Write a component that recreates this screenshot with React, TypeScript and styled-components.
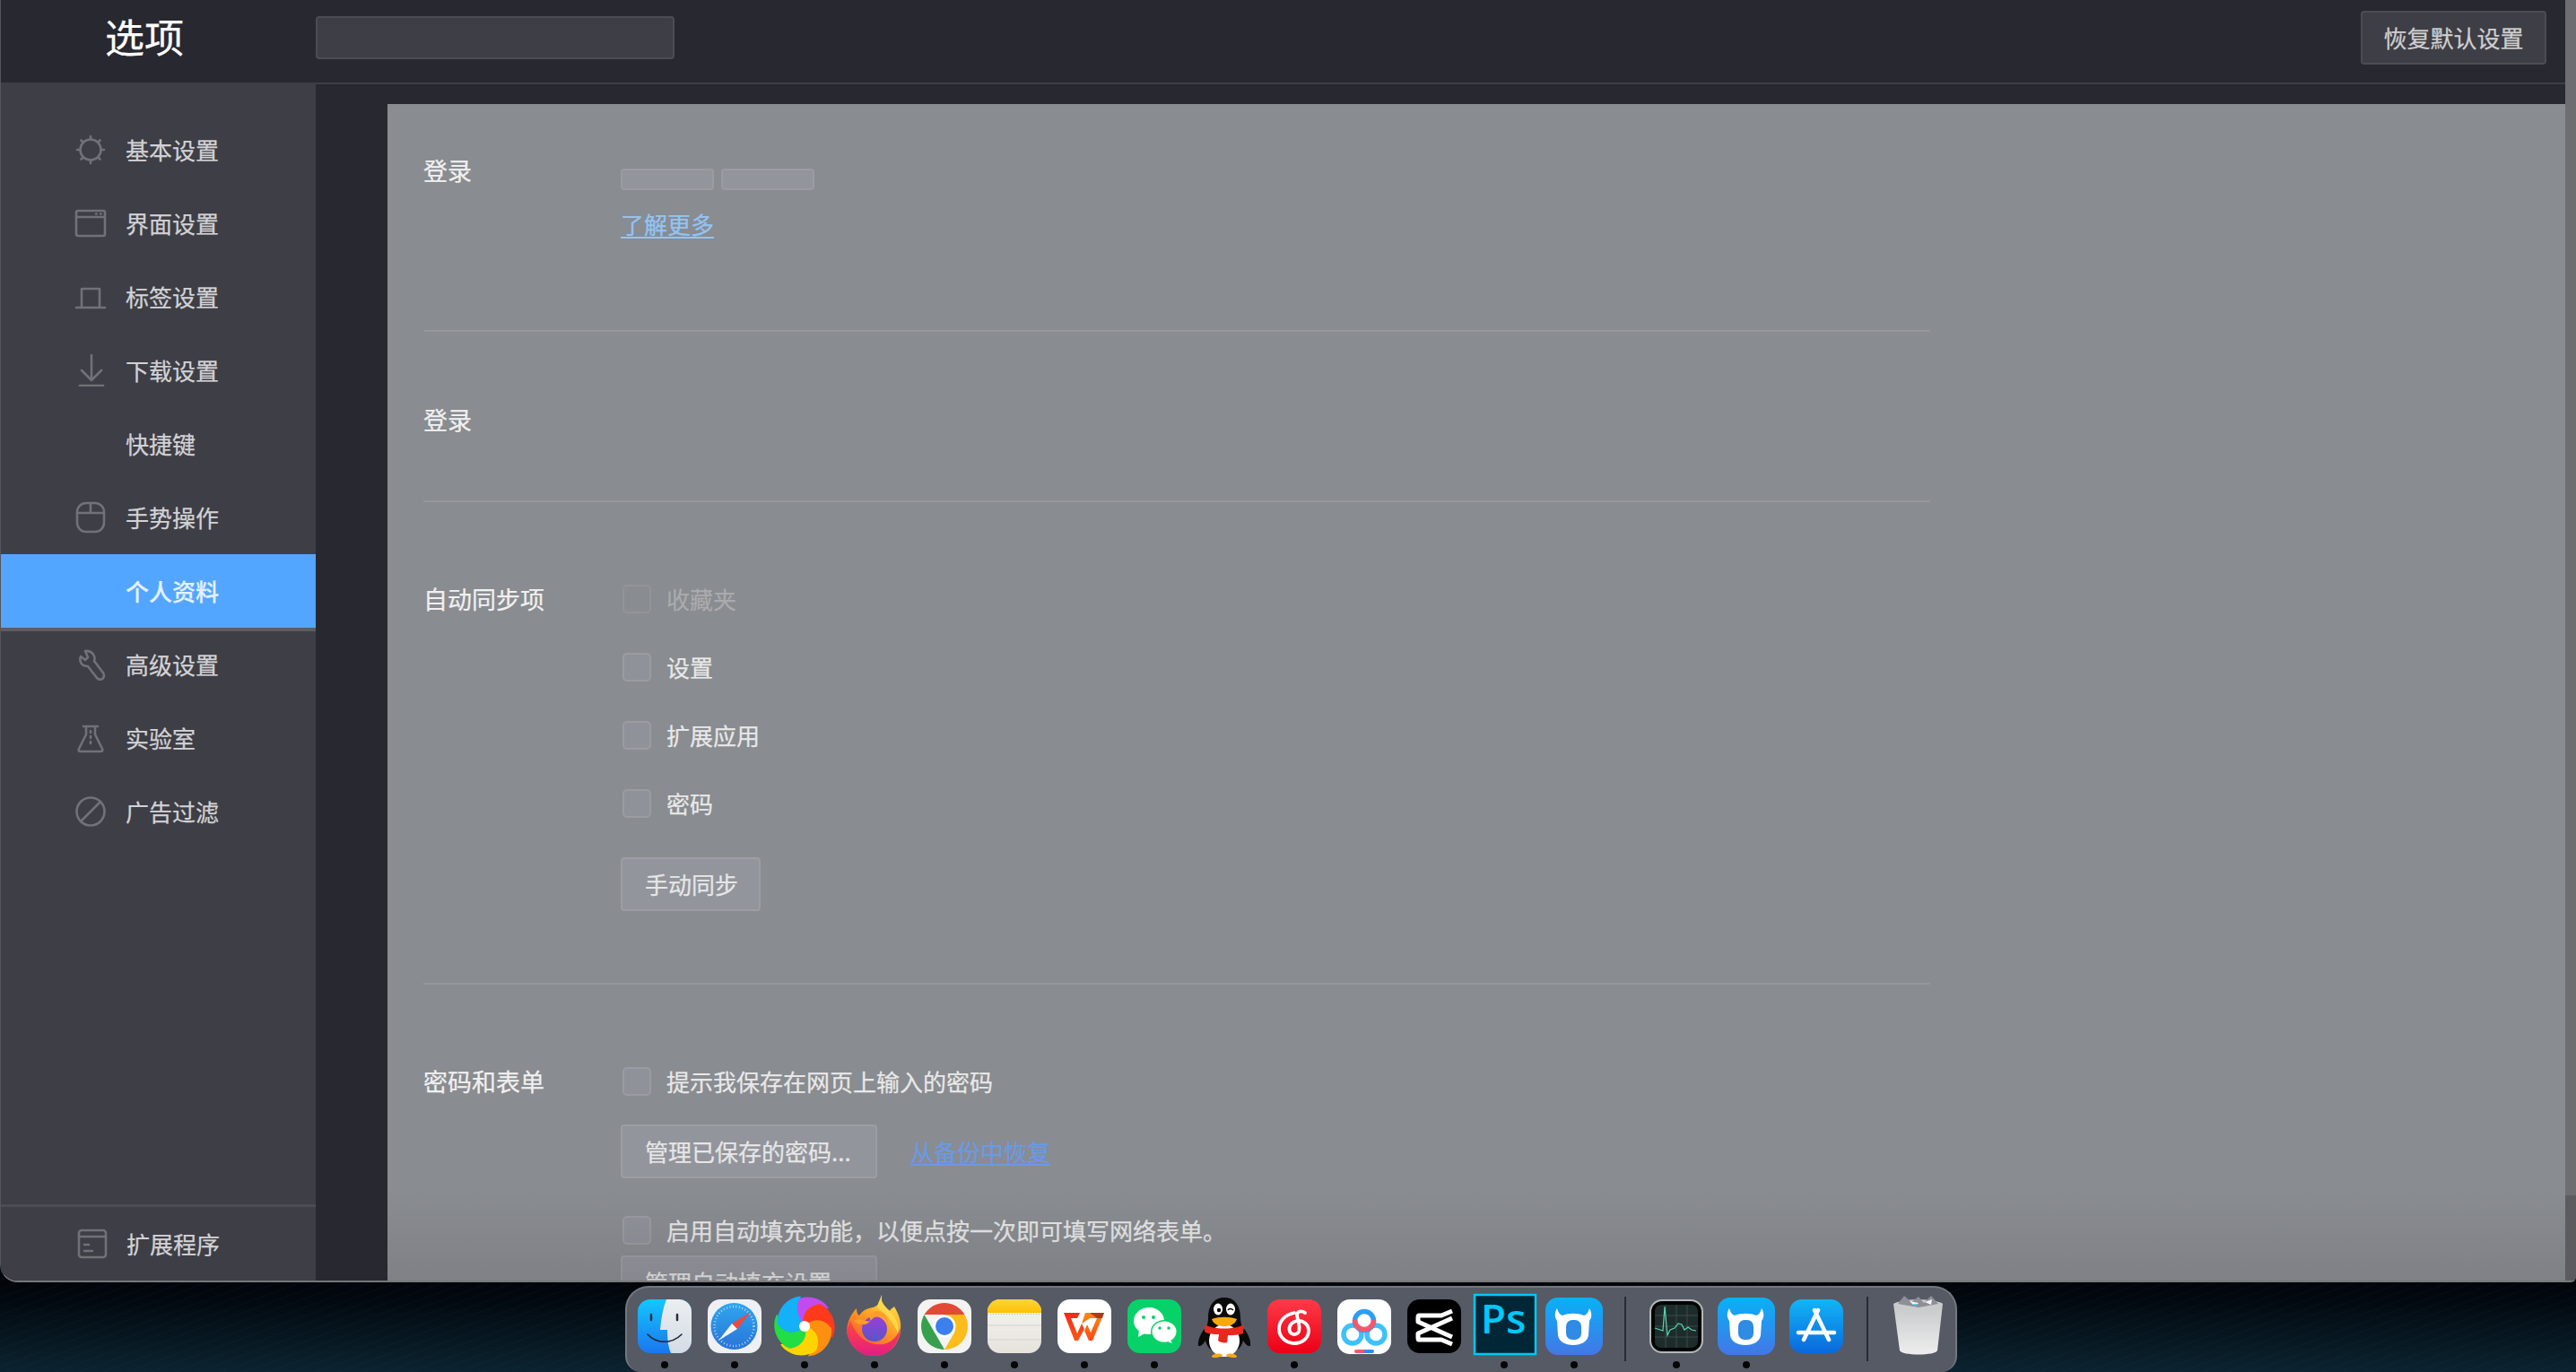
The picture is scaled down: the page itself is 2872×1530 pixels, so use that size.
import * as React from "react";
import styled, { createGlobalStyle } from "styled-components";

const GlobalStyle = createGlobalStyle`
  html, body {
    margin: 0;
    padding: 0;
    width: 2872px;
    height: 1530px;
    overflow: hidden;
    background: #04101a;
    font-family: "Noto Sans CJK SC", "Noto Sans", sans-serif;
    -webkit-text-stroke: 0.25px;
  }
  * { box-sizing: border-box; }
`;

const Desktop = styled.div`
  width: 2872px;
  height: 1530px;
  display: flex;
  flex-direction: column;
  background:
    repeating-linear-gradient(160deg, rgba(90, 140, 160, 0.025) 0 2px, transparent 2px 9px),
    linear-gradient(180deg, #01050a 1430px, #02090f 1450px, #0b2330 1530px);
`;

const Window = styled.div`
  height: 1430px;
  display: flex;
  overflow: hidden;
  border-radius: 0 0 6px 20px;
  border-bottom: 2px solid #77787c;
  border-left: 1px solid #55555c;
`;

const Main = styled.div`
  flex: 1;
  min-width: 0;
  display: flex;
  flex-direction: column;
  background: #282830;
`;

const ScrollTrack = styled.div`
  width: 12px;
  display: flex;
  flex-direction: column;
  justify-content: flex-end;
  background: #6e6d72;
`;

const ScrollThumb = styled.div`
  height: 95px;
  background: #5c5b60;
`;

const Header = styled.header`
  height: 94px;
  flex: none;
  display: flex;
  align-items: flex-start;
  border-bottom: 2px solid #3e3e46;
  padding: 12px 21px 0 0;
`;

const Title = styled.h1`
  width: 351px;
  margin: 0;
  padding: 0 0 0 116px;
  color: #fff;
  font-size: 44px;
  font-weight: 400;
  line-height: 56px;
`;

const SearchBox = styled.div`
  width: 400px;
  height: 48px;
  margin-top: 6px;
  background: #3e3e46;
  border: 2px solid #4c4c54;
  border-radius: 4px;
`;

const ResetButton = styled.button`
  margin-left: auto;
  width: 207px;
  height: 60px;
  padding: 0 0 2px;
  background: #3e3e46;
  border: 2px solid #4c4c54;
  border-radius: 4px;
  color: #cfcfcf;
  font: inherit;
  font-size: 26px;
`;

const Body = styled.div`
  flex: 1;
  min-height: 0;
  display: flex;
`;

const Sidebar = styled.nav`
  width: 351px;
  flex: none;
  display: flex;
  flex-direction: column;
  background: #3e3e46;
  margin-top: -2px;
  padding-top: 34px;
`;

const NavRow = styled.div<{ $active?: boolean }>`
  height: 82px;
  flex: none;
  display: flex;
  align-items: center;
  gap: 21px;
  padding-left: 82px;
  font-size: 26px;
  color: ${p => (p.$active ? "#e4f1ff" : "#d2d2d4")};
  font-weight: ${p => (p.$active ? 500 : 400)};
  background: ${p => (p.$active ? "#52a6ff" : "transparent")};
  box-shadow: ${p => (p.$active ? "0 4px 0 #5c5c66" : "none")};
`;

const NavLabel = styled.span`
  padding-bottom: 2px;
`;

const NavIcon = styled.svg`
  width: 36px;
  height: 36px;
  flex: none;
  fill: none;
  stroke: #717177;
  stroke-width: 2.6;
  stroke-linecap: round;
  stroke-linejoin: round;
`;

const SidebarFooter = styled.div`
  margin-top: auto;
  height: 85px;
  flex: none;
  border-top: 3px solid #4c4c52;
  display: flex;
  align-items: center;
  gap: 20px;
  padding: 0 0 0 84px;
  color: #d2d2d4;
  font-size: 26px;
`;

const Content = styled.main`
  flex: 1;
  min-width: 0;
  display: flex;
  padding: 22px 0 0 80px;
`;

const Panel = styled.div`
  flex: 1;
  min-width: 0;
  position: relative;
  overflow: hidden;
  padding-left: 40px;
  background: #898c90;
`;

const DockShadow = styled.div`
  position: absolute;
  left: 0;
  right: 0;
  bottom: 0;
  height: 100px;
  background: linear-gradient(180deg, rgba(60, 60, 66, 0), rgba(60, 60, 66, 0.14));
`;

const Section = styled.section<{ $top: number; $bottom: number; $last?: boolean }>`
  width: 1680px;
  display: flex;
  padding: ${p => p.$top}px 0 ${p => p.$bottom}px;
  border-bottom: ${p => (p.$last ? "none" : "2px solid #95979b")};
`;

const Label = styled.div`
  width: 220px;
  flex: none;
  color: #f0f0f0;
  font-size: 27px;
  line-height: 36px;
`;

const Fields = styled.div`
  flex: 1;
  display: flex;
  flex-direction: column;
  align-items: flex-start;
`;

const SmallButtons = styled.div`
  display: flex;
  gap: 8px;
  margin: 16px 0 20px;
`;

const SmallButton = styled.div`
  width: 104px;
  height: 24px;
  background: #92959c;
  border: 2px solid #9a9ca2;
  border-radius: 4px;
`;

const TextLink = styled.a<{ $dim?: boolean }>`
  color: ${p => (p.$dim ? "#6a9ae6" : "#93c4f5")};
  font-size: 26px;
  line-height: 36px;
  text-decoration: underline;
  text-underline-offset: 3px;
`;

const CheckRow = styled.label<{ $gap?: number; $disabled?: boolean }>`
  display: flex;
  align-items: center;
  gap: 17px;
  height: 36px;
  margin-top: ${p => p.$gap || 0}px;
  padding-left: 2px;
  font-size: 26px;
  color: ${p => (p.$disabled ? "#a9abae" : "#e8e8e8")};
`;

const CheckText = styled.span`
  padding-bottom: 2px;
`;

const CheckBox = styled.span<{ $disabled?: boolean }>`
  width: 32px;
  height: 32px;
  border-radius: 5px;
  background: ${p => (p.$disabled ? "#898c90" : "#90929a")};
  border: 2px solid ${p => (p.$disabled ? "#929498" : "#9a9ca2")};
`;

const FormButton = styled.button<{ $gap?: number; $w: number }>`
  width: ${p => p.$w}px;
  height: 60px;
  flex: none;
  margin-top: ${p => p.$gap || 0}px;
  padding: 0 0 2px 25px;
  text-align: left;
  background: #93959c;
  border: 2px solid #9c9ea3;
  border-radius: 4px;
  color: #e6e6e6;
  font: inherit;
  font-size: 26px;
`;

const ButtonRow = styled.div<{ $gap: number }>`
  display: flex;
  align-items: center;
  gap: 37px;
  margin-top: ${p => p.$gap}px;
`;

const Dock = styled.footer`
  width: 1485px;
  height: 96px;
  margin: 4px 0 0 697px;
  display: flex;
  padding: 2px 2px 0 3px;
  background: #555a65;
  border: 2px solid #74777f;
  border-bottom: none;
  border-radius: 26px 26px 18px 18px;
`;

const DockSlot = styled.div`
  width: 78px;
  flex: none;
  display: flex;
  flex-direction: column;
  align-items: center;
`;

const DockIcon = styled.svg`
  width: 78px;
  height: 72px;
  flex: none;
  overflow: visible;
  -webkit-text-stroke: 0;
`;

const RunDot = styled.span<{ $on: boolean }>`
  width: 8px;
  height: 8px;
  margin-top: 8px;
  border-radius: 50%;
  background: ${p => (p.$on ? "#050505" : "transparent")};
`;

const DockSep = styled.div`
  width: 36px;
  flex: none;
  display: flex;
  justify-content: center;
  padding-top: 8px;

  &::before {
    content: "";
    width: 2px;
    height: 72px;
    background: #272b36;
  }
`;

// sidebar icons, all on a 36 box
const nav = {
  gear: (
    <>
      <circle cx="18" cy="18" r="11.5" />
      <path d="M18 3v3M18 30v3M3 18h2.5M30.500 18H33M7.500 7.500l2 2M26.500 26.500l2 2M28.500 7.500l-2 2M9.500 26.500l-2 2" />
    </>
  ),
  window: (
    <>
      <rect x="2" y="4" width="32" height="28" rx="2" />
      <path d="M2 11h32M24 7.500h.5M29 7.500h.5" />
    </>
  ),
  tab: <path d="M8 29V9h20v20M2 30h32" />,
  down: <path d="M19 1v27M8 18l11 11 11-11M6 35h26" />,
  mouse: (
    <>
      <rect x="3" y="2" width="30" height="32" rx="10" />
      <path d="M18 2v11M3 13h30" />
    </>
  ),
  wrench: <path d="M12 3 15 10 12 13 7 9C5 15 8 20 15 20L25 33C28 36 33 35 33 30 33 28 32 27 31 26L22 14C24 8 19 2 12 3Z" />,
  flask: <path d="M10 5h16M13 5v9L5 30c-1 2 0 3 2 3h22c2 0 3-1 2-3l-8-16V5M18 10v2M18 16v2M18 22v2" />,
  ban: (
    <>
      <circle cx="18" cy="18" r="15.500" />
      <path d="M7 29 29 7" />
    </>
  ),
  ext: (
    <>
      <rect x="3" y="3" width="30" height="30" rx="3" />
      <path d="M3 10h30M9 19h5M9 26h9" />
    </>
  ),
};

const Squircle: React.FC<{ fill: string }> = ({ fill }) => (
  <rect x="0" y="0" width="60" height="60" rx="14" fill={fill} />
);

const Finder = () => (
  <>
    <Squircle fill="url(#finderBlue)" />
    <path d="M32 0h14a14 14 0 0 1 14 14v32a14 14 0 0 1-14 14h-9c-3-7-4-16-4-26h-8c1-12 3-24 7-34Z" fill="url(#finderGrey)" />
    <path d="M15 17v6M44 17v6" stroke="#26303a" strokeWidth="2.500" strokeLinecap="round" />
    <path d="M11 39c10 11 27 11 38 0" stroke="#1e2630" strokeWidth="1.600" fill="none" strokeLinecap="round" />
  </>
);

const Safari = () => (
  <>
    <Squircle fill="#eef0f3" />
    <circle cx="29.500" cy="30" r="26" fill="url(#safariBlue)" />
    <circle cx="29.500" cy="30" r="22" fill="none" stroke="#cfe6fa" strokeWidth="2.500" strokeDasharray="0.8 2.7" />
    <path d="M48 14 33 33 27 27Z" fill="#f0483c" />
    <path d="M12 46 27 27 33 33Z" fill="#f4f6f8" />
  </>
);

const PETALS = ["#c24bf0", "#ff3a1c", "#ff8f10", "#ffd400", "#22dd44", "#14b0f8"];

const Pinwheel = () => (
  <g transform="translate(30 30)">
    {PETALS.map((c, i) => (
      <path
        key={c}
        transform={`rotate(${i * 60})`}
        d="M0 0C-12-2-19-14-13-27-2-36 18-34 27-20 16-21 7-15 0 0Z"
        fill={c}
      />
    ))}
    <circle r="6" fill="#fff" />
  </g>
);

const Firefox = () => (
  <>
    <path d="M38-5C34 4 40 9 46 15 47 11 50 10 52 8 58 18 60 26 59 34 58 50 46 63 29 63 12 63 0 50-1 34 0 24 4 16 10 10 10 14 11 17 13 18 16 13 21 10 28 9 34 7 39 3 38-5Z" fill="url(#foxFlame)" />
    <path d="M38-5C36 3 42 8 48 14 55 22 58 30 56 38 52 26 44 18 36 12 30 8 36 2 38-5Z" fill="#ffd84a" />
    <path d="M3 24C10 40 20 52 40 50 50 48 56 40 59 32 58 50 46 63 29 63 12 63 0 50-1 34Z" fill="url(#foxBottom)" />
    <circle cx="30" cy="33" r="14" fill="url(#foxBall)" />
    <path d="M7 24C14 20 20 26 26 24 22 18 28 13 34 13 42 14 46 20 45 28 42 20 36 18 30 20 26 22 24 28 18 28 14 28 10 27 7 24Z" fill="#ff9d2c" />
  </>
);

const Chrome = () => (
  <>
    <Squircle fill="#f3f3f1" />
    <path d="M7.500 17A26 26 0 0 1 52.500 17H30Z" fill="#e34a35" />
    <path d="M7.500 17 19 37 30 56A26 26 0 0 1 7.500 17Z" fill="#36a04e" />
    <path d="M52.500 17A26 26 0 0 1 30 56L41.500 36.500 30 17Z" fill="#fbbc1c" />
    <circle cx="30" cy="30" r="12.500" fill="#fff" />
    <circle cx="30" cy="30" r="10" fill="#3b80ec" />
  </>
);

const Notes = () => (
  <>
    <Squircle fill="url(#notesPaper)" />
    <path d="M0 15V14A14 14 0 0 1 14 0H46A14 14 0 0 1 60 14V15Z" fill="url(#notesYellow)" />
    <path d="M0 16.500H60" stroke="#c9c6bf" strokeWidth="1.500" strokeDasharray="1 2" />
    <path d="M0 29H60M0 45H60" stroke="#dcdad5" strokeWidth="1.500" />
  </>
);

const Wps = () => (
  <>
    <Squircle fill="#fff" />
    <path d="M7 15H25L22 21H15L22 38 27 27 30 33 23 46H19Z" fill="url(#wpsRed)" />
    <path d="M31 15H52L39 46H35L30 35 33 28 37 37 44 21H36L27 27Z" fill="url(#wpsOrange)" />
    <path d="M36 15H52L50 21H44Z" fill="#8e1c12" opacity="0.7" />
  </>
);

const WeChat = () => (
  <>
    <Squircle fill="#07d269" />
    <ellipse cx="24" cy="24" rx="17" ry="15" fill="#fff" />
    <path d="M13 34 12 42 21 37Z" fill="#fff" />
    <ellipse cx="41" cy="36" rx="15" ry="13" fill="#07d269" />
    <ellipse cx="41" cy="36" rx="13.500" ry="11.500" fill="#fff" />
    <path d="M47 44 50 49 42 46Z" fill="#fff" />
    <circle cx="18" cy="20" r="2" fill="#07d269" />
    <circle cx="29" cy="20" r="2" fill="#07d269" />
    <circle cx="36" cy="32" r="1.800" fill="#07d269" />
    <circle cx="46" cy="32" r="1.800" fill="#07d269" />
  </>
);

const Penguin = () => (
  <g transform="translate(0 -4)">
    <path d="M12 25C12 9 20 2 30 2 40 2 48 9 48 25 48 29 49 32 50 35 56 40 60 50 59 56 55 56 54 54 51 50 49 58 44 64 30 64 16 64 11 58 9 50 6 54 5 56 1 56 0 50 4 40 10 35 11 32 12 29 12 25Z" fill="#0a0a0a" />
    <ellipse cx="30" cy="50" rx="17" ry="18" fill="#fff" />
    <path d="M16 68C16 65 24 63 28 66 28 69 16 70 16 68ZM44 68C44 65 36 63 32 66 32 69 44 70 44 68Z" fill="#f4a916" />
    <ellipse cx="23" cy="15" rx="5" ry="6.500" fill="#fff" />
    <ellipse cx="37" cy="15" rx="5" ry="6.500" fill="#fff" />
    <circle cx="24" cy="16" r="2.200" fill="#000" />
    <path d="M34 16c1-2 4-2 6 0" stroke="#000" strokeWidth="1.500" fill="none" />
    <path d="M16 26C24 23 36 23 44 26 42 33 34 34 30 34 26 34 18 33 16 26Z" fill="#f6a90e" />
    <path d="M8 32C18 38 42 38 52 32L51 42C46 44 38 44 34 44L33 52C31 53 25 52 23 50L24 43C18 43 12 43 8 40Z" fill="#e8281e" />
  </g>
);

const NetEase = () => (
  <>
    <Squircle fill="url(#neteaseRed)" />
    <path d="M30 15C20 17 13 24 13 33 13 42 21 49 30 49 39 49 46 43 46 35 46 28 40 23 33 24 27 25 23 30 25 36 27 40 33 40 35 36 37 31 34 23 33 18 33 13 38 12 42 15" fill="none" stroke="#fff" strokeWidth="3.800" strokeLinecap="round" />
  </>
);

const Baidu = () => (
  <>
    <rect x="0" y="0" width="60" height="61" rx="14" fill="#fff" />
    <circle cx="17" cy="39" r="10" fill="none" stroke="#3ec1fb" strokeWidth="5.500" />
    <circle cx="43" cy="39" r="10" fill="none" stroke="#3ec1fb" strokeWidth="5.500" />
    <circle cx="30" cy="24" r="10.500" fill="none" stroke="#2f9df3" strokeWidth="5.500" />
    <path d="M19.500 23A10.500 10.500 0 0 0 40.500 23" fill="none" stroke="#f5586c" strokeWidth="5.500" />
    <path d="M21 56H30V60H21a2 2 0 0 1 0-4Z" fill="#f5586c" />
    <path d="M30 56H39a2 2 0 0 1 0 4H30Z" fill="#2f8cf0" />
  </>
);

const CapCut = () => (
  <>
    <Squircle fill="#000" />
    <path d="M50 13 38 18H13C12 18 12 19 12 20V25L50 42M50 50 38 45H13C12 45 12 44 12 43V38L50 21" fill="none" stroke="#fff" strokeWidth="5" strokeLinejoin="round" />
  </>
);

const Photoshop = () => (
  <>
    <rect x="-3" y="-5" width="68" height="66" fill="#012636" stroke="#00c8f8" strokeWidth="2.500" />
    <text x="29" y="38" fill="#00c8f8" fontFamily="Open Sans, sans-serif" fontSize="46" fontWeight="600" textAnchor="middle">Ps</text>
  </>
);

const Cow = () => (
  <>
    <rect x="-2" y="-2" width="64" height="64" rx="14" fill="url(#cowBlue)" />
    <path d="M11 10C12 14 14 17 17 18 24 15 34 15 41 18 44 17 46 14 47 10 50 15 50 20 47 24L46 40C45 47 38 51 29 51 20 51 13 47 12 40L11 24C8 20 8 15 11 10Z" fill="#fff" />
    <rect x="21" y="23" width="17" height="22" rx="7" fill="#2f8be3" />
  </>
);

const Activity = () => (
  <>
    <Squircle fill="#b2b8b8" />
    <rect x="2" y="2" width="56" height="56" rx="12" fill="#030504" />
    <rect x="6" y="6" width="48" height="48" rx="7" fill="#1d2c2a" />
    <path d="M6 18H54M6 30H54M6 42H54M18 6V54M30 6V54M42 6V54" stroke="#3d5650" strokeWidth="0.800" />
    <path d="M6 32 15 35 17 8 20 40 23 34 28 32 32 27 36 28 39 34 43 31 47 34 52 35" stroke="#5cd2b0" strokeWidth="1.200" fill="none" />
  </>
);

const AppStore = () => (
  <>
    <Squircle fill="url(#storeBlue)" />
    <path d="M32 12 16 45M28 12 44 45M10 37H50" stroke="#fff" strokeWidth="4.500" strokeLinecap="round" />
  </>
);

const Trash = () => (
  <>
    <path d="M-1 5C6 0 50 0 54 5L48 57C46 63 8 63 6 57Z" fill="url(#trashGlass)" transform="translate(3 0)" />
    <ellipse cx="29.500" cy="6" rx="26" ry="6" fill="#c9cbcc" />
    <path d="M7 5 14 -4 22 3 30 -3 36 4 44 -4 52 5 30 9Z" fill="#8d8f94" />
    <path d="M20 2 30 4 26 8ZM37 3 45 0 44 6Z" fill="#f4f4f4" />
    <path d="M22 6 28 5 27 8Z" fill="#38b0d8" />
  </>
);

const DOCK: ({ key: string; icon: React.FC; on: boolean } | { key: string })[] = [
  { key: "finder", icon: Finder, on: true },
  { key: "safari", icon: Safari, on: true },
  { key: "pinwheel", icon: Pinwheel, on: true },
  { key: "firefox", icon: Firefox, on: true },
  { key: "chrome", icon: Chrome, on: true },
  { key: "notes", icon: Notes, on: true },
  { key: "wps", icon: Wps, on: true },
  { key: "wechat", icon: WeChat, on: true },
  { key: "qq", icon: Penguin, on: false },
  { key: "netease", icon: NetEase, on: true },
  { key: "baidu", icon: Baidu, on: false },
  { key: "capcut", icon: CapCut, on: false },
  { key: "ps", icon: Photoshop, on: true },
  { key: "cow", icon: Cow, on: true },
  { key: "sep1" },
  { key: "activity", icon: Activity, on: true },
  { key: "cow2", icon: Cow, on: true },
  { key: "store", icon: AppStore, on: false },
  { key: "sep2" },
  { key: "trash", icon: Trash, on: false },
];

const Gradients = () => (
  <svg width="0" height="0" style={{ position: "absolute" }}>
    <defs>
      <linearGradient id="finderBlue" x1="0" y1="0" x2="0" y2="1"><stop offset="0" stopColor="#15c6fe" /><stop offset="1" stopColor="#1a76ee" /></linearGradient>
      <linearGradient id="finderGrey" x1="0" y1="0" x2="0" y2="1"><stop offset="0" stopColor="#eceef0" /><stop offset="1" stopColor="#d4dce6" /></linearGradient>
      <linearGradient id="safariBlue" x1="0" y1="0" x2="0" y2="1"><stop offset="0" stopColor="#2ea6ef" /><stop offset="1" stopColor="#2a74d6" /></linearGradient>
      <linearGradient id="foxFlame" x1="0.800" y1="0" x2="0.200" y2="1"><stop offset="0" stopColor="#ffe84a" /><stop offset="0.450" stopColor="#ff9a22" /><stop offset="1" stopColor="#f2403a" /></linearGradient>
      <linearGradient id="foxBottom" x1="0" y1="0" x2="0" y2="1"><stop offset="0" stopColor="#ff4a3a" /><stop offset="1" stopColor="#e21c86" /></linearGradient>
      <linearGradient id="foxBall" x1="0.500" y1="0" x2="0.500" y2="1"><stop offset="0" stopColor="#9a3ed8" /><stop offset="1" stopColor="#5a55c8" /></linearGradient>
      <linearGradient id="notesPaper" x1="0" y1="0" x2="0" y2="1"><stop offset="0" stopColor="#f5f4f1" /><stop offset="1" stopColor="#e6e3dd" /></linearGradient>
      <linearGradient id="notesYellow" x1="0" y1="0" x2="0" y2="1"><stop offset="0" stopColor="#fcd53a" /><stop offset="1" stopColor="#fcc204" /></linearGradient>
      <linearGradient id="wpsRed" x1="0" y1="0" x2="0" y2="1"><stop offset="0" stopColor="#f0291c" /><stop offset="1" stopColor="#fb5a14" /></linearGradient>
      <linearGradient id="wpsOrange" x1="0" y1="0" x2="0" y2="1"><stop offset="0" stopColor="#ff8a10" /><stop offset="1" stopColor="#fb4a14" /></linearGradient>
      <linearGradient id="neteaseRed" x1="0" y1="0" x2="0" y2="1"><stop offset="0" stopColor="#fd3a48" /><stop offset="1" stopColor="#ec0016" /></linearGradient>
      <linearGradient id="cowBlue" x1="0" y1="0" x2="0" y2="1"><stop offset="0" stopColor="#07b2f6" /><stop offset="1" stopColor="#4476e6" /></linearGradient>
      <linearGradient id="storeBlue" x1="0" y1="0" x2="0" y2="1"><stop offset="0" stopColor="#12b5f6" /><stop offset="1" stopColor="#0a68dc" /></linearGradient>
      <linearGradient id="trashGlass" x1="0" y1="0" x2="0" y2="1"><stop offset="0" stopColor="#c3c5c6" /><stop offset="1" stopColor="#eeeeee" /></linearGradient>
    </defs>
  </svg>
);

const NAV_ITEMS: { label: string; icon?: keyof typeof nav; active?: boolean }[] = [
  { label: "基本设置", icon: "gear" },
  { label: "界面设置", icon: "window" },
  { label: "标签设置", icon: "tab" },
  { label: "下载设置", icon: "down" },
  { label: "快捷键" },
  { label: "手势操作", icon: "mouse" },
  { label: "个人资料", active: true },
  { label: "高级设置", icon: "wrench" },
  { label: "实验室", icon: "flask" },
  { label: "广告过滤", icon: "ban" },
];

const SYNC_ITEMS = ["收藏夹", "设置", "扩展应用", "密码"];

export default function App() {
  return (
    <Desktop>
      <GlobalStyle />
      <Gradients />
      <Window>
        <Main>
          <Header>
            <Title>选项</Title>
            <SearchBox />
            <ResetButton>恢复默认设置</ResetButton>
          </Header>
          <Body>
            <Sidebar>
              {NAV_ITEMS.map(item => (
                <NavRow key={item.label} $active={item.active}>
                  <NavIcon viewBox="0 0 36 36">{item.icon && nav[item.icon]}</NavIcon>
                  <NavLabel>{item.label}</NavLabel>
                </NavRow>
              ))}
              <SidebarFooter>
                <NavIcon viewBox="0 0 36 36">{nav.ext}</NavIcon>
                <NavLabel>扩展程序</NavLabel>
              </SidebarFooter>
            </Sidebar>
            <Content>
              <Panel>
                <Section $top={56} $bottom={100}>
                  <Label>登录</Label>
                  <Fields>
                    <SmallButtons>
                      <SmallButton />
                      <SmallButton />
                    </SmallButtons>
                    <TextLink>了解更多</TextLink>
                  </Fields>
                </Section>
                <Section $top={80} $bottom={72}>
                  <Label>登录</Label>
                </Section>
                <Section $top={90} $bottom={80}>
                  <Label>自动同步项</Label>
                  <Fields>
                    {SYNC_ITEMS.map((text, i) => (
                      <CheckRow key={text} $gap={i ? 40 : 0} $disabled={i === 0}>
                        <CheckBox $disabled={i === 0} />
                        <CheckText>{text}</CheckText>
                      </CheckRow>
                    ))}
                    <FormButton $w={156} $gap={42}>手动同步</FormButton>
                  </Fields>
                </Section>
                <Section $top={90} $bottom={0} $last>
                  <Label>密码和表单</Label>
                  <Fields>
                    <CheckRow>
                      <CheckBox />
                      <CheckText>提示我保存在网页上输入的密码</CheckText>
                    </CheckRow>
                    <ButtonRow $gap={30}>
                      <FormButton $w={286}>管理已保存的密码...</FormButton>
                      <TextLink $dim>从备份中恢复</TextLink>
                    </ButtonRow>
                    <CheckRow $gap={40}>
                      <CheckBox />
                      <CheckText>{"启用自动填充功能\uFF0C以便点按一次即可填写网络表单。"}</CheckText>
                    </CheckRow>
                    <FormButton $w={286} $gap={10}>管理自动填充设置</FormButton>
                  </Fields>
                </Section>
                <DockShadow />
              </Panel>
            </Content>
          </Body>
        </Main>
        <ScrollTrack>
          <ScrollThumb />
        </ScrollTrack>
      </Window>
      <Dock>
        {DOCK.map(item =>
          "icon" in item ? (
            <DockSlot key={item.key}>
              <DockIcon viewBox="0 0 78 72">
                <g transform="translate(9 11)">
                  <item.icon />
                </g>
              </DockIcon>
              <RunDot $on={item.on} />
            </DockSlot>
          ) : (
            <DockSep key={item.key} />
          )
        )}
      </Dock>
    </Desktop>
  );
}
